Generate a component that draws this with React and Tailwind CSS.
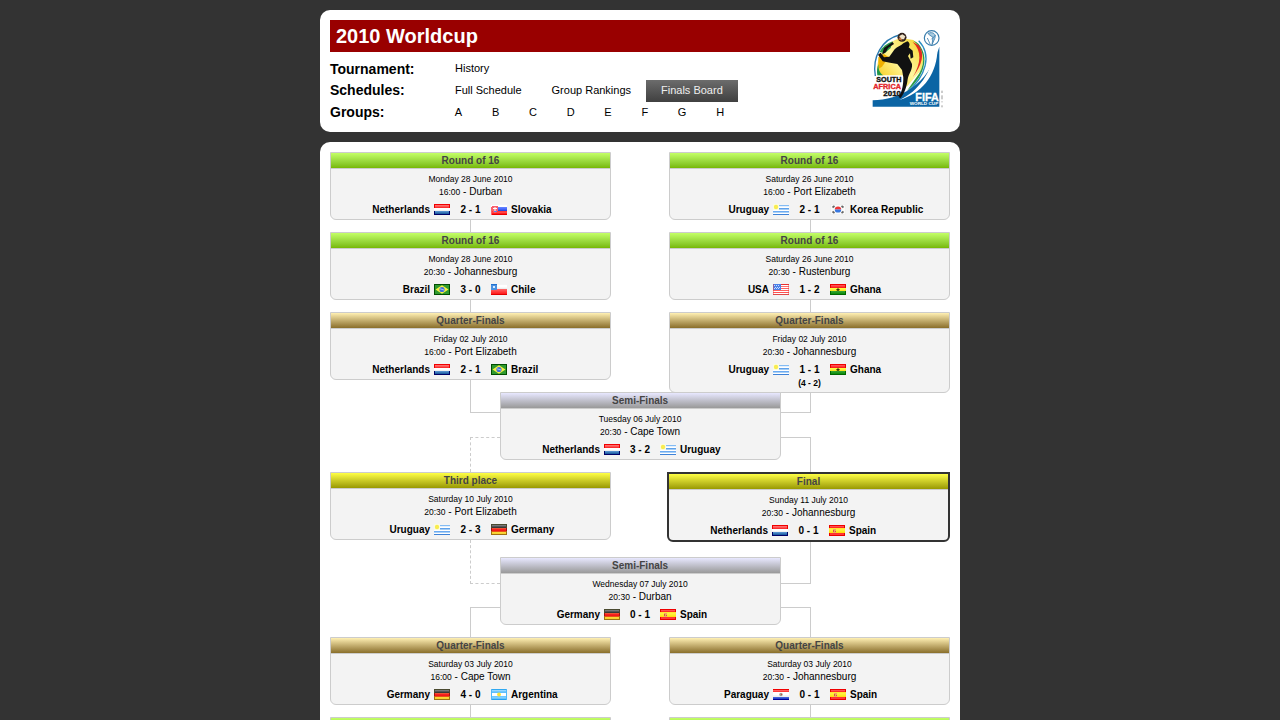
import React from 'react';

const HEADER_STYLES = {
  r16: 'bg-linear-to-b from-[#c3ff66] to-[#77b900]',
  quarter: 'bg-linear-to-b from-[#fff0b3] to-[#8a6f2a]',
  semi: 'bg-linear-to-b from-[#e8e8ff] to-[#999999]',
  place: 'bg-linear-to-b from-[#ffff44] to-[#999900]',
};

function Stripes({ rows }) {
  return rows.map((fill, i) => <rect key={i} x="0" y={i} width="16" height="1" fill={fill} />);
}

const FLAGS = {
  Netherlands: (
    <>
      <Stripes rows={['#f00000', '#ff6c6c', '#ff5050', '#f83030', '#ffffff', '#ffffff', '#f2f2f2', '#5590cc', '#3a78b8', '#1f5fa5', '#000066']} />
      <path d="M0 0h1v4H0zM15 0h1v4h-1z" fill="#f00000" />
      <path d="M0 7h1v4H0zM15 7h1v4h-1z" fill="#000066" />
    </>
  ),
  Slovakia: (
    <>
      <Stripes rows={['#f4f4f4', '#ffffff', '#ffffff', '#6080ff', '#5070ff', '#4060f0', '#2848e0', '#ff3838', '#ff4848', '#ff2020', '#e80000']} />
      <path d="M1 2h6v5L4 9 1 7z" fill="#f8606c" />
      <path d="M3.500 3h1v4h-1zM2 4h4v1H2z" fill="#ffffff" shapeRendering="auto" />
      <path d="M3 7h3v1H3z" fill="#6080e8" />
      <path d="M0 3h1v8H0z" fill="#ff6068" />
    </>
  ),
  Brazil: (
    <>
      <rect width="16" height="11" fill="#004d00" />
      <rect x="1" y="1" width="14" height="9" fill="#2f9a2f" />
      <path d="M8 1.200 14.500 5.500 8 9.800 1.500 5.500z" fill="#f8f040" shapeRendering="auto" />
      <circle cx="8" cy="5.500" r="2.600" fill="#4070d8" shapeRendering="auto" />
      <path d="M6 4.800l4 1.200" stroke="#c0d8f8" strokeWidth=".8" shapeRendering="auto" />
    </>
  ),
  Chile: (
    <>
      <Stripes rows={['#f4f4f4', '#ffffff', '#ffffff', '#f8f8f8', '#eeeeee', '#ff6060', '#ff5050', '#ff4040', '#ff3030', '#ff2020', '#e00000']} />
      <rect width="6" height="6" fill="#4a90e0" />
      <path d="M2 2h2v2H2z" fill="#d8ecff" />
      <rect width="6" height="1" fill="#2070d0" />
    </>
  ),
  Uruguay: (
    <>
      <Stripes rows={['#f4f4f4', '#84bcf4', '#e4f0fc', '#ffffff', '#5fa2ea', '#a4ccf4', '#ffffff', '#6caaf0', '#a8d0f8', '#ffffff', '#3e82d8']} />
      <rect width="6" height="6" fill="#fcfce0" />
      <circle cx="3" cy="3" r="2.200" fill="#f8ec50" shapeRendering="auto" />
    </>
  ),
  'Korea Republic': (
    <>
      <rect width="16" height="11" fill="#f0f0f0" />
      <rect x="1" y="1" width="14" height="9" fill="#fafafa" />
      <g shapeRendering="auto">
        <path d="M4.800 5.600a3.200 3.200 0 0 1 6.400 0z" fill="#f03838" />
        <path d="M4.800 5.400a3.200 3.200 0 0 0 6.400 0z" fill="#3878e0" />
        <path d="M2.500 3.500l2-1.500M11.500 2l2 1.500M2.500 7.500l2 1.500M11.500 9l2-1.500" stroke="#666" strokeWidth="1.700" />
      </g>
    </>
  ),
  USA: (
    <>
      <Stripes rows={['#e83030', '#ffffff', '#ff7070', '#ffffff', '#ff6060', '#ffffff', '#ff6060', '#ffffff', '#ff5050', '#ffffff', '#e04848']} />
      <rect width="8" height="6" fill="#4a80e8" />
      <path d="M1 1h1v1H1zM3 1h1v1H3zM5 1h1v1H5zM2 3h1v1H2zM4 3h1v1H4zM6 3h1v1H6zM1 4h1v1H1zM3 4h1v1H3zM5 4h1v1H5z" fill="#c8dcff" />
      <path d="M0 0h1v11H0zM15 0h1v11h-1z" fill="#e83030" fillOpacity=".4" />
    </>
  ),
  Ghana: (
    <>
      <Stripes rows={['#f00000', '#ff5050', '#ff3838', '#f82020', '#ffff40', '#fff040', '#f8e820', '#30a030', '#209820', '#109010', '#006600']} />
      <path d="M0 0h1v4H0zM15 0h1v4h-1z" fill="#e80000" />
      <path d="M0 7h1v4H0zM15 7h1v4h-1z" fill="#006600" />
      <path d="M8 3.500l.7 1.500h1.500L9 6l.5 1.500L8 6.600 6.500 7.500 7 6 5.800 5h1.500z" fill="#3a3a00" shapeRendering="auto" />
    </>
  ),
  Germany: (
    <>
      <Stripes rows={['#4a4a30', '#777777', '#555555', '#383838', '#f05030', '#f82020', '#f01818', '#e85018', '#f8d838', '#f8d030', '#a07010']} />
      <path d="M0 0h1v4H0zM15 0h1v4h-1z" fill="#4a4a30" />
      <path d="M0 4h1v3H0zM15 4h1v3h-1z" fill="#a01010" />
      <path d="M0 7h1v4H0zM15 7h1v4h-1z" fill="#a07010" />
    </>
  ),
  Spain: (
    <>
      <Stripes rows={['#f00000', '#ff5050', '#ff2828', '#ffe830', '#fff040', '#ffee30', '#ffe820', '#ffe010', '#ff3030', '#ff3838', '#e80000']} />
      <path d="M0 0h1v3H0zM15 0h1v3h-1zM0 8h1v3H0zM15 8h1v3h-1z" fill="#e80000" />
      <path d="M4 4h3v4H4z" fill="#f0a860" />
      <path d="M4 5h1v2H4zM6 6h1v1H6z" fill="#d85048" />
    </>
  ),
  Argentina: (
    <>
      <Stripes rows={['#30a8f0', '#98d8ff', '#70c8ff', '#60c0fc', '#ffffff', '#ffffff', '#ffffff', '#70c8ff', '#80d0ff', '#68c4fc', '#28a0f0']} />
      <path d="M0 0h1v11H0zM15 0h1v11h-1z" fill="#50b8f8" />
      <circle cx="8" cy="5.500" r="1.900" fill="#f8e038" shapeRendering="auto" />
    </>
  ),
  Paraguay: (
    <>
      <Stripes rows={['#f00000', '#ff6060', '#ff3838', '#ffffff', '#ffffff', '#ffffff', '#f4f4f4', '#f0f0f0', '#4060d8', '#2848c8', '#000099']} />
      <circle cx="8" cy="5.500" r="1.700" fill="#a0a090" shapeRendering="auto" />
      <path d="M8 5h1v1H8z" fill="#d04040" />
    </>
  ),
};

function Flag({ team }) {
  return (
    <svg className="h-[11px] w-4 shrink-0" viewBox="0 0 16 11" shapeRendering="crispEdges" aria-hidden="true">
      {FLAGS[team]}
    </svg>
  );
}

const MATCHES = [
  { pos: 'left-[10px] top-[10px]', kind: 'r16', title: 'Round of 16', date: 'Monday 28 June 2010', time: '16:00', city: 'Durban', home: 'Netherlands', score: '2 - 1', away: 'Slovakia' },
  { pos: 'left-[349px] top-[10px]', kind: 'r16', title: 'Round of 16', date: 'Saturday 26 June 2010', time: '16:00', city: 'Port Elizabeth', home: 'Uruguay', score: '2 - 1', away: 'Korea Republic' },
  { pos: 'left-[10px] top-[90px]', kind: 'r16', title: 'Round of 16', date: 'Monday 28 June 2010', time: '20:30', city: 'Johannesburg', home: 'Brazil', score: '3 - 0', away: 'Chile' },
  { pos: 'left-[349px] top-[90px]', kind: 'r16', title: 'Round of 16', date: 'Saturday 26 June 2010', time: '20:30', city: 'Rustenburg', home: 'USA', score: '1 - 2', away: 'Ghana' },
  { pos: 'left-[10px] top-[170px]', kind: 'quarter', title: 'Quarter-Finals', date: 'Friday 02 July 2010', time: '16:00', city: 'Port Elizabeth', home: 'Netherlands', score: '2 - 1', away: 'Brazil' },
  { pos: 'left-[349px] top-[170px]', kind: 'quarter', title: 'Quarter-Finals', date: 'Friday 02 July 2010', time: '20:30', city: 'Johannesburg', home: 'Uruguay', score: '1 - 1', away: 'Ghana', penalties: '(4 - 2)' },
  { pos: 'left-[179.600px] top-[250px]', kind: 'semi', title: 'Semi-Finals', date: 'Tuesday 06 July 2010', time: '20:30', city: 'Cape Town', home: 'Netherlands', score: '3 - 2', away: 'Uruguay' },
  { pos: 'left-[10px] top-[330px]', kind: 'place', title: 'Third place', date: 'Saturday 10 July 2010', time: '20:30', city: 'Port Elizabeth', home: 'Uruguay', score: '2 - 3', away: 'Germany' },
  { pos: 'left-[347px] top-[330px]', kind: 'place', final: true, title: 'Final', date: 'Sunday 11 July 2010', time: '20:30', city: 'Johannesburg', home: 'Netherlands', score: '0 - 1', away: 'Spain' },
  { pos: 'left-[179.600px] top-[415px]', kind: 'semi', title: 'Semi-Finals', date: 'Wednesday 07 July 2010', time: '20:30', city: 'Durban', home: 'Germany', score: '0 - 1', away: 'Spain' },
  { pos: 'left-[10px] top-[495px]', kind: 'quarter', title: 'Quarter-Finals', date: 'Saturday 03 July 2010', time: '16:00', city: 'Cape Town', home: 'Germany', score: '4 - 0', away: 'Argentina' },
  { pos: 'left-[349px] top-[495px]', kind: 'quarter', title: 'Quarter-Finals', date: 'Saturday 03 July 2010', time: '20:30', city: 'Johannesburg', home: 'Paraguay', score: '0 - 1', away: 'Spain' },
  { pos: 'left-[10px] top-[575px]', kind: 'r16' },
  { pos: 'left-[349px] top-[575px]', kind: 'r16' },
];

const LINKS = [
  'left-[150px] top-[78px] h-[12px] border-l',
  'left-[490px] top-[78px] h-[12px] border-l',
  'left-[150px] top-[158px] h-[12px] border-l',
  'left-[490px] top-[158px] h-[12px] border-l',
  'left-[150px] top-[238px] h-[33px] w-[30px] border-l border-b',
  'left-[461px] top-[238px] h-[33px] w-[30px] border-r border-b',
  'left-[150px] top-[295px] h-[35px] w-[30px] border-l border-t border-dashed',
  'left-[461px] top-[295px] h-[35px] w-[30px] border-r border-t',
  'left-[150px] top-[398px] h-[44px] w-[30px] border-l border-b border-dashed',
  'left-[461px] top-[398px] h-[44px] w-[30px] border-r border-b',
  'left-[150px] top-[465px] h-[30px] w-[30px] border-l border-t',
  'left-[461px] top-[465px] h-[30px] w-[30px] border-r border-t',
  'left-[150px] top-[563px] h-[12px] border-l',
  'left-[490px] top-[563px] h-[12px] border-l',
];

function MatchCard({ match }) {
  const frame = match.final
    ? 'w-[283px] border-2 border-[#333333]'
    : 'w-[281px] border border-[#cccccc]';
  const height = match.final ? 'h-[70px]' : match.penalties ? 'h-[81px]' : 'h-[68px]';
  const columns = match.kind === 'semi' ? 'grid-cols-[119.400px_40px_119px]' : 'grid-cols-[119px_41px_119px]';
  return (
    <article className={`absolute overflow-hidden rounded-b-[6px] bg-[#f3f3f3] ${frame} ${height} ${match.pos}`}>
      <h2 className={`h-4 border-b border-[#cccccc] text-center text-[10px] leading-[15px] font-bold text-[#444444] ${HEADER_STYLES[match.kind]}`}>
        {match.title}
      </h2>
      {match.home && (
        <div className="flex flex-col pt-[4px] text-center text-[10px] text-black">
          <p className="h-3 text-[8.500px] leading-[13px]">{match.date}</p>
          <p className="h-[13px] leading-[13px]">
            <span className="text-[8.500px]">{match.time}</span> - {match.city}
          </p>
          <div className={`mt-[6px] grid h-3 items-start leading-3 font-bold ${columns}`}>
            <span className="flex items-start justify-end gap-1 whitespace-nowrap">
              {match.home}
              <Flag team={match.home} />
            </span>
            <span>{match.score}</span>
            <span className="flex items-start gap-1 whitespace-nowrap">
              <Flag team={match.away} />
              {match.away}
            </span>
          </div>
          {match.penalties && <p className="mt-px text-[8.500px] leading-3 font-bold">{match.penalties}</p>}
        </div>
      )}
    </article>
  );
}

function WorldCupLogo() {
  return (
    <svg className="h-[84px] w-[76px]" viewBox="30 18 228 252" aria-label="2010 FIFA World Cup South Africa">
      <defs>
        <linearGradient id="sweep" x1="0" y1="1" x2="1" y2="0">
          <stop offset="0" stopColor="#f6c400" />
          <stop offset=".5" stopColor="#fff7a0" />
          <stop offset="1" stopColor="#f5d21f" />
        </linearGradient>
      </defs>
      <path d="M46 168C36 110 66 58 118 45" fill="none" stroke="#2878b0" strokeWidth="4" />
      <path d="M54 166C44 112 74 66 122 54L160 60C192 84 196 122 182 152L140 200 128 166Z" fill="url(#sweep)" />
      <path d="M58 96C68 80 82 70 98 64L92 84 74 100Z" fill="#2b9a48" />
      <path d="M55 112L72 102 86 112 66 140 56 146Z" fill="#f0b000" />
      <path d="M56 132C54 148 60 160 70 166L52 166C50 152 51 142 56 132Z" fill="#20964a" />
      <path d="M160 62C192 86 198 124 178 160L140 214C178 184 208 132 186 88C180 74 172 66 160 62Z" fill="#2b9a48" />
      <path d="M158 66C186 92 184 130 158 172C186 136 196 100 176 76Z" fill="#e22b20" />
      <path d="M176 62C216 104 200 168 138 220" fill="none" stroke="#2d8fc4" strokeWidth="4" />
      <path d="M238 80V260H38V241C118 238 204 198 238 80Z" fill="#0b64a4" />
      <path d="M222 92C216 154 176 214 118 240C184 220 226 170 232 98Z" fill="#ffffff" />
      <path
        d="M54 104L62 98 72 112 88 110 104 88C112 80 122 78 130 70L142 64C150 68 150 76 146 82L158 92 160 112 152 116 150 100 144 108 156 132C158 150 146 160 143 178C140 202 134 218 122 234L116 232C128 212 130 192 130 172L126 150 112 132 90 128 68 124Z"
        fill="#111111"
      />
      <path d="M72 84L98 66 102 72 84 84 78 96 66 104Z" fill="#111111" />
      <circle cx="126" cy="52" r="13.500" fill="#33231c" />
      <path d="M118 48l9-5 9 6-4 9h-11z" fill="#eee2c8" />
      <path d="M114 58l8-6 5 10z" fill="#c87538" />
      <circle cx="215" cy="54" r="22" fill="#ffffff" stroke="#387cac" strokeWidth="3.500" />
      <path d="M204 40c14-6 26 2 20 16l-8 18 3-22-13-9zM202 54l9 20M227 45l-13 13" fill="#a8cbe0" stroke="#387cac" strokeWidth="2.500" />
      <g fontFamily="'Liberation Sans', Arial, sans-serif" fontWeight="bold" strokeWidth="1">
        <text x="49" y="186" fontSize="20" textLength="75" lengthAdjust="spacingAndGlyphs" fill="#111111" stroke="#111111">SOUTH</text>
        <text x="40" y="207" fontSize="20" textLength="83" lengthAdjust="spacingAndGlyphs" fill="#e3262a" stroke="#e3262a">AFRICA</text>
        <text x="70" y="227" fontSize="20" textLength="53" lengthAdjust="spacingAndGlyphs" fill="#111111" stroke="#111111">2010</text>
        <text x="166" y="243" fontSize="32" textLength="70" lengthAdjust="spacingAndGlyphs" fill="#ffffff" stroke="#ffffff">FIFA</text>
        <text x="149" y="256" fontSize="13" textLength="86" lengthAdjust="spacingAndGlyphs" fill="#ffffff">WORLD CUP</text>
      </g>
      <path d="M246 212v7M246 226v12M246 244v3M246 256v6" stroke="#999999" strokeWidth="3" />
    </svg>
  );
}

const NAV = [
  { label: 'Tournament:', items: ['History'], leading: 'leading-[22px]', padding: 'px-[15px]' },
  { label: 'Schedules:', items: ['Full Schedule', 'Group Rankings', 'Finals Board'], leading: 'leading-[20px]', padding: 'px-[14.970px]' },
  { label: 'Groups:', items: ['A', 'B', 'C', 'D', 'E', 'F', 'G', 'H'], leading: 'leading-[20px]', padding: 'px-[14.870px]' },
];

function NavRow({ row }) {
  return (
    <div className="flex h-[22px]">
      <div className={`w-[110px] text-[14px] font-bold ${row.leading}`}>{row.label}</div>
      <nav className="flex text-[11px] leading-[21px]">
        {row.items.map((item) => (
          <a
            key={item}
            className={`${row.padding} ${item === 'Finals Board' ? 'bg-linear-to-b from-[#6c6c6c] to-[#404040] text-[#eeeeee]' : ''}`}
          >
            {item}
          </a>
        ))}
      </nav>
    </div>
  );
}

export default function App() {
  return (
    <div className="flex h-[720px] flex-col items-center gap-[10px] overflow-hidden bg-[#333333] pt-[10px] font-['Liberation_Sans',Arial,sans-serif] text-black">
      <header className="flex h-[122px] w-[640px] shrink-0 rounded-[10px] bg-white p-[10px]">
        <div className="w-[520px]">
          <h1 className="h-8 bg-[#990000] px-[6px] text-[20px] leading-8 font-bold text-white">2010 Worldcup</h1>
          <div className="pt-[6px]">
            {NAV.map((row) => (
              <NavRow key={row.label} row={row} />
            ))}
          </div>
        </div>
        <div className="pt-[6px] pl-5">
          <WorldCupLogo />
        </div>
      </header>
      <main className="relative h-[660px] w-[640px] shrink-0 rounded-t-[10px] bg-white">
        {LINKS.map((link) => (
          <div key={link} className={`absolute border-[#cccccc] ${link}`} />
        ))}
        {MATCHES.map((match) => (
          <MatchCard key={match.pos} match={match} />
        ))}
      </main>
    </div>
  );
}
